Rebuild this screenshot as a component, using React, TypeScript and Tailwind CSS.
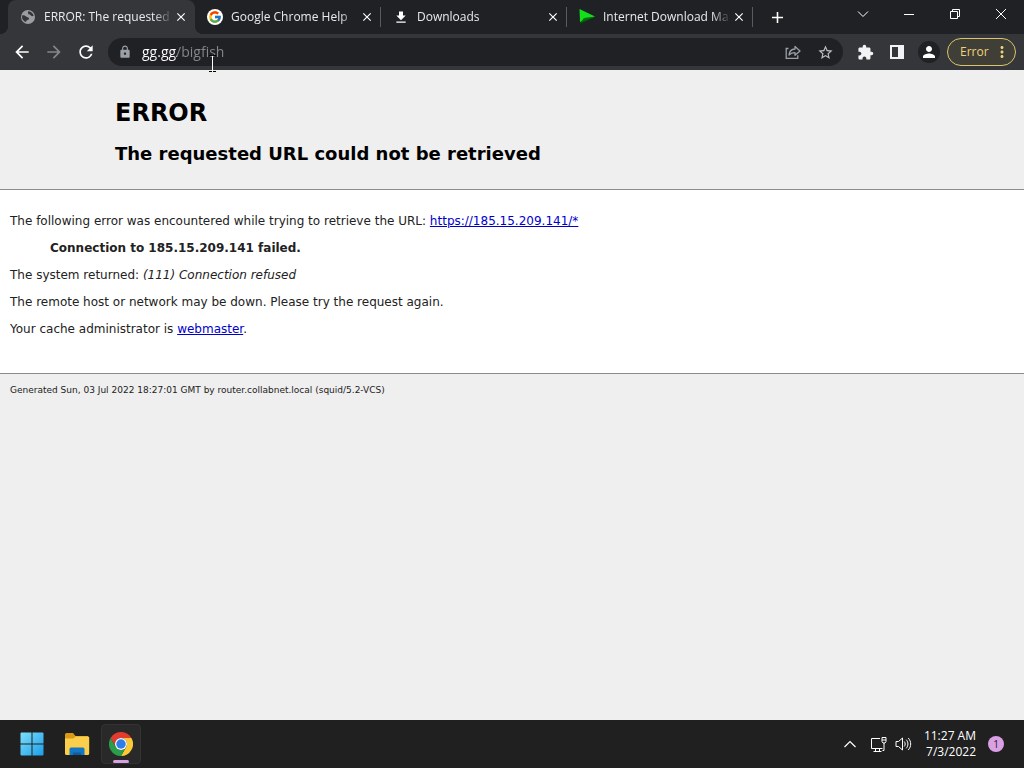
import type { ReactNode } from "react";
import {
  MdAdd,
  MdArrowBack,
  MdArrowForward,
  MdClose,
  MdExtension,
  MdGetApp,
  MdLock,
  MdMoreVert,
  MdPerson,
  MdRefresh,
  MdStarBorder,
} from "react-icons/md";
import { FcGoogle } from "react-icons/fc";

function GlobeIcon() {
  return (
    <svg viewBox="0 0 16 16" className="w-4 h-4">
      <circle cx="8" cy="8" r="7" fill="#9b9da0" />
      <path d="M2.300 6.200C3.800 6 5 6.500 6.200 7.600c.9.800 2 .7 2.600 1.400.6.800.2 1.600-.7 1.700-1.300.2-1.700 1-2.300 2.400C3.600 12.200 2 10.300 2 8z" fill="#35363a" />
      <path d="M8.500 2.300c2.500.2 4.600 2 5.200 4.500-1.200.6-2.400.4-3-.5-.6-.8-1.600-.6-2.300-1.300-.6-.8-.6-2 .1-2.700z" fill="#35363a" />
    </svg>
  );
}

function IdmIcon() {
  return (
    <svg viewBox="0 0 16 16" className="w-4 h-4">
      <path d="M1 15.500L2 8l14 .5z" fill="#0b3d12" />
      <path d="M.5 0L16 7.500 1 13z" fill="#12e01c" />
      <path d="M1 14L16 7.500 5 9z" fill="#0a6a10" />
    </svg>
  );
}

function ChromeIcon() {
  return (
    <svg viewBox="0 0 48 48" className="w-6 h-6">
      <path d="M3.200 12A24 24 0 0 1 44.800 12H24A12 12 0 0 0 13.600 30z" fill="#e33b2e" />
      <path d="M44.800 12A24 24 0 0 1 24 48L34.400 30A12 12 0 0 0 24 12z" fill="#fcc934" />
      <path d="M24 48A24 24 0 0 1 3.200 12L13.600 30A12 12 0 0 0 34.400 30z" fill="#2a9d4b" />
      <circle cx="24" cy="24" r="12" fill="#fff" />
      <circle cx="24" cy="24" r="9.500" fill="#2f7de9" />
    </svg>
  );
}

function WindowsIcon() {
  return (
    <svg viewBox="0 0 24 24" className="w-6 h-6">
      <defs>
        <linearGradient id="win" x1="0" y1="0" x2="24" y2="24" gradientUnits="userSpaceOnUse">
          <stop offset="0" stopColor="#7fe0fb" />
          <stop offset="1" stopColor="#1a9be8" />
        </linearGradient>
      </defs>
      <path
        d="M1.500 .5H11.500V11.500H.5V1.500a1 1 0 0 1 1-1zM12.500 .5H22.500a1 1 0 0 1 1 1V11.500H12.500zM.5 12.500H11.500V23.500H1.500a1 1 0 0 1-1-1zM12.500 12.500H23.500V22.500a1 1 0 0 1-1 1H12.500z"
        fill="url(#win)"
      />
    </svg>
  );
}

function FolderIcon() {
  return (
    <svg viewBox="0 0 26 24" className="w-[26px] h-6">
      <path d="M1 2.500A1.500 1.500 0 0 1 2.500 1H9l2.500 3H24v6H1z" fill="#d99a16" />
      <path d="M1 6.500h8.500l2-2H24A1.200 1.200 0 0 1 25.200 6v15.500A1.500 1.500 0 0 1 23.700 23H2.500A1.500 1.500 0 0 1 1 21.500z" fill="#fbcf4b" />
      <path d="M5.500 23v-6a1.500 1.500 0 0 1 1.500-1.500h12a1.500 1.500 0 0 1 1.500 1.500v6z" fill="#1477c4" />
      <path d="M9 23v-2.500h8V23z" fill="#0d5c9e" />
    </svg>
  );
}

function ShareIcon() {
  return (
    <svg viewBox="0 0 16 16" className="w-4 h-4" fill="none" stroke="#9aa0a6" strokeWidth="1.300">
      <path d="M3.500 4.500H1.200v9.800h11.600v-3" />
      <path d="M4 11c.3-3.800 2.600-5.800 6-6V2.500L15 7l-5 4.300V8.700C7.400 8.700 5.600 9.400 4 11z" strokeLinejoin="round" />
    </svg>
  );
}

function Tab({ icon, title, active, divider }: { icon: ReactNode; title: string; active?: boolean; divider?: boolean }) {
  return (
    <div
      className={`flex items-center h-[34px] pl-3 pr-1.5 ${
        active
          ? "w-[187px] relative bg-[#35363a] rounded-t-lg before:absolute before:bottom-0 before:-left-2 before:size-2 before:bg-[radial-gradient(circle_at_0_0,#202124_8px,#35363a_8px)] after:absolute after:bottom-0 after:-right-2 after:size-2 after:bg-[radial-gradient(circle_at_100%_0,#202124_8px,#35363a_8px)]"
          : "w-[186px]"
      } ${
        divider
          ? "bg-[linear-gradient(#5a5b5f,#5a5b5f)] bg-[length:1px_20px] bg-[position:right_center] bg-no-repeat"
          : ""
      }`}
    >
      <span className="flex justify-center w-4 shrink-0">{icon}</span>
      <span className="flex-1 ml-2 overflow-hidden whitespace-nowrap text-xs text-[#e8eaed] mask-r-from-85% mask-r-to-100%">
        {title}
      </span>
      <button aria-label={`Close ${title}`} className="flex justify-center w-4 shrink-0 text-white">
        <MdClose size={14} />
      </button>
    </div>
  );
}

function TabStrip() {
  return (
    <div className="flex h-[34px] bg-[#202124] pl-2">
      <Tab active icon={<GlobeIcon />} title="ERROR: The requested" />
      <Tab
        divider
        icon={
          <span className="flex items-center justify-center w-4 h-4 rounded-full bg-white">
            <FcGoogle size={14} />
          </span>
        }
        title="Google Chrome Help"
      />
      <Tab divider icon={<MdGetApp size={17} color="#fff" />} title="Downloads" />
      <Tab divider icon={<IdmIcon />} title="Internet Download Ma" />
      <button aria-label="New tab" className="flex items-center justify-center w-12 text-white">
        <MdAdd size={19} />
      </button>
      <div className="flex h-7 ml-auto text-white">
        <button aria-label="Search tabs" className="flex items-center justify-center w-[46px]">
          <svg viewBox="0 0 12 12" className="w-3 h-3" fill="none" stroke="currentColor">
            <path d="M1 3.500l5 5 5-5" />
          </svg>
        </button>
        <button aria-label="Minimize" className="flex items-center justify-center w-[46px]">
          <svg viewBox="0 0 10 10" className="w-2.5 h-2.5" stroke="currentColor">
            <path d="M0 5.500h10" />
          </svg>
        </button>
        <button aria-label="Restore" className="flex items-center justify-center w-[46px]">
          <svg viewBox="0 0 10 10" className="w-2.5 h-2.5" fill="none" stroke="currentColor">
            <path d="M.5 2.500h7v7h-7zM2.500 2.500v-2h7v7h-2" />
          </svg>
        </button>
        <button aria-label="Close" className="flex items-center justify-center w-[46px]">
          <svg viewBox="0 0 10 10" className="w-2.5 h-2.5" stroke="currentColor">
            <path d="M0 0l10 10M10 0L0 10" />
          </svg>
        </button>
      </div>
    </div>
  );
}

function Toolbar() {
  return (
    <div className="flex items-center h-9 bg-[#35363a] pl-1.5 pr-2">
      <button aria-label="Back" className="flex justify-center w-8 text-white">
        <MdArrowBack size={20} />
      </button>
      <button aria-label="Forward" className="flex justify-center w-8 text-[#85878a]">
        <MdArrowForward size={20} />
      </button>
      <button aria-label="Reload" className="flex justify-center w-8 text-white">
        <MdRefresh size={20} />
      </button>
      <div className="flex items-center flex-1 h-7 ml-1.5 pl-2.5 pr-2.5 rounded-full bg-[#202124]">
        <MdLock size={14} color="#9aa0a6" />
        <input
          aria-label="Address"
          defaultValue="gg.gg/bigfish"
          className="flex-1 min-w-0 ml-2.5 text-sm text-transparent bg-clip-text bg-[linear-gradient(90deg,#fff_35px,#85898d_35px)] outline-none"
        />
        <button aria-label="Share" className="flex justify-center w-8">
          <ShareIcon />
        </button>
        <button aria-label="Bookmark" className="flex justify-center w-4 ml-2 text-[#bdc1c6]">
          <MdStarBorder size={17} className="shrink-0" />
        </button>
      </div>
      <button aria-label="Extensions" className="flex justify-center w-8 ml-1.5 text-[#f1f3f4]">
        <MdExtension size={17} />
      </button>
      <button aria-label="Side panel" className="flex justify-center w-8">
        <svg viewBox="0 0 14 14" className="w-3.5 h-3.5">
          <path d="M0 0h14v14H0zM2 2v10h6V2z" fill="#f1f3f4" fillRule="evenodd" />
        </svg>
      </button>
      <button aria-label="Profile" className="flex justify-center w-8 text-white">
        <span className="flex items-center justify-center w-[22px] h-[22px] rounded-full bg-[#202124]">
          <MdPerson size={18} />
        </span>
      </button>
      <button className="flex items-center justify-between w-[69px] h-7 ml-0.5 pl-3 pr-1 rounded-full border border-[#d9c66b] bg-[#3f3e37] text-xs text-[#f0d37c]">
        Error
        <MdMoreVert size={18} />
      </button>
    </div>
  );
}

function ErrorPage() {
  return (
    <main className="flex-1 bg-[#efefef] font-['DejaVu_Sans',Verdana,sans-serif] text-xs text-[#222]">
      <header className="h-[119px] pl-[115px] pt-[27px] text-black">
        <h1 className="text-2xl leading-8 font-bold">ERROR</h1>
        <h2 className="mt-[11px] text-lg leading-7 font-bold">The requested URL could not be retrieved</h2>
      </header>
      <hr className="border-[#8c8c8c]" />
      <section className="flex flex-col gap-[11px] h-[183px] px-2.5 pt-[23px] bg-white">
        <p>
          The following error was encountered while trying to retrieve the URL:{" "}
          <a href="#" className="text-[#0000cc] underline">
            https://185.15.209.141/*
          </a>
        </p>
        <blockquote className="pl-10 font-bold">Connection to 185.15.209.141 failed.</blockquote>
        <p>
          The system returned: <i>(111) Connection refused</i>
        </p>
        <p>The remote host or network may be down. Please try the request again.</p>
        <p>
          Your cache administrator is{" "}
          <a href="#" className="text-[#0000cc] underline">
            webmaster
          </a>
          .
        </p>
      </section>
      <hr className="border-[#8c8c8c]" />
      <footer className="px-2.5 pt-2 text-[9px] leading-4">
        Generated Sun, 03 Jul 2022 18:27:01 GMT by router.collabnet.local (squid/5.2-VCS)
      </footer>
    </main>
  );
}

function Taskbar() {
  return (
    <footer className="flex items-center h-12 pl-3 pr-5 bg-[#202020] text-white">
      <button aria-label="Start" className="flex items-center justify-center w-10 h-10">
        <WindowsIcon />
      </button>
      <button aria-label="File Explorer" className="flex items-center justify-center w-10 h-10 ml-[5px]">
        <FolderIcon />
      </button>
      <button
        aria-label="Google Chrome"
        className="relative flex items-center justify-center w-10 h-10 ml-1 rounded border border-[#333] bg-[#292929]"
      >
        <ChromeIcon />
        <span className="absolute bottom-0 w-4 h-[3px] rounded-full bg-[#d7a0e0]"></span>
      </button>
      <div className="flex items-center ml-auto">
        <button aria-label="Show hidden icons" className="flex justify-center w-8">
          <svg viewBox="0 0 12 12" className="w-3 h-3" fill="none" stroke="currentColor" strokeWidth="1.200">
            <path d="M.5 9L6 3.500 11.500 9" />
          </svg>
        </button>
        <button aria-label="Network and volume" className="flex items-center gap-2 ml-1 mr-3">
          <svg viewBox="0 0 17 17" className="w-[17px] h-[17px]" fill="none" stroke="currentColor">
            <path d="M10 2.500H1.500v10h11M3.500 15.500h8M5.500 12.500v3M9.500 12.500v3M14 7v7.500h-1.500M12 1.500h4v4l-1 1.500h-2l-1-1.500zM12 4h4" />
          </svg>
          <svg viewBox="0 0 17 16" className="w-[17px] h-4" fill="none" stroke="currentColor" strokeLinejoin="round">
            <path d="M1 5.500h2.500L7.500 2v12l-4-3.500H1z" />
            <path d="M9.500 5.800c1 1.200 1 3.200 0 4.400M11.500 4c2 2.200 2 5.800 0 8M13.500 2.300c3 3.200 3 8.200 0 11.400" strokeLinecap="round" />
          </svg>
        </button>
        <time className="text-right text-xs">
          11:27 AM
          <br />
          7/3/2022
        </time>
        <span className="flex items-center justify-center w-4 h-4 ml-3 rounded-full bg-[#d9a0e4] text-[10px] text-[#222]">
          1
        </span>
      </div>
    </footer>
  );
}

export default function App() {
  return (
    <div className="relative flex flex-col min-h-screen font-['Open_Sans','Segoe_UI',sans-serif]">
      <TabStrip />
      <Toolbar />
      <ErrorPage />
      <Taskbar />
      {/* text cursor */}
      <svg viewBox="0 0 7 17" className="absolute left-[209px] top-[55px] w-[7px] h-[17px] pointer-events-none">
        <path d="M3.500 1v15" stroke="#fff" />
        <path d="M0 .5h3M4 .5h3M0 16.500h3M4 16.500h3" stroke="#000" />
      </svg>
    </div>
  );
}
